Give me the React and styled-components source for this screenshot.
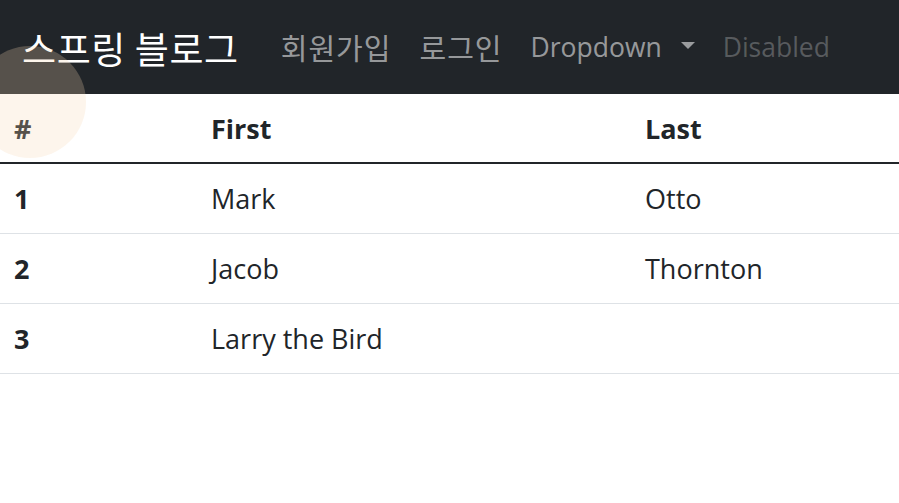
import React from "react";
import styled, { createGlobalStyle } from "styled-components";

const GlobalStyle = createGlobalStyle`
  html, body {
    margin: 0;
    padding: 0;
    background: #ffffff;
  }
  body {
    font-family: "Open Sans", "Noto Sans CJK KR", sans-serif;
    color: #212529;
  }
`;

const Page = styled.div`
  position: relative;
  width: 899px;
  height: 503px;
  overflow: hidden;
`;

const Navbar = styled.nav`
  height: 94px;
  background: #212529;
  display: flex;
  align-items: center;
  padding-left: 22px;
  box-sizing: border-box;
`;

const Brand = styled.a`
  font-family: "Noto Sans CJK KR", sans-serif;
  font-size: 37px;
  letter-spacing: 0.6px;
  color: #ffffff;
  margin-right: 28px;
  line-height: 1;
  margin-top: 2px;
`;

const NavLink = styled.a`
  display: flex;
  align-items: center;
  padding: 0 14px;
  line-height: 1;
  color: ${(p) => (p.$disabled ? "rgba(255,255,255,0.25)" : "rgba(255,255,255,0.55)")};
  font-family: ${(p) =>
    p.$korean ? `"Noto Sans CJK KR", sans-serif` : `"Open Sans", sans-serif`};
  font-size: ${(p) => (p.$korean ? "29px" : "26.5px")};
  letter-spacing: ${(p) => (p.$korean ? "1px" : "0")};
  margin-top: ${(p) => (p.$korean ? "0" : "0")};
`;

const Caret = styled.span`
  display: inline-block;
  margin-left: 19px;
  width: 0;
  height: 0;
  border-left: 7px solid transparent;
  border-right: 7px solid transparent;
  border-top: 7px solid rgba(255, 255, 255, 0.55);
  margin-top: -4px;
`;

const Highlight = styled.div`
  position: absolute;
  z-index: 5;
  left: -26px;
  top: 46px;
  width: 112px;
  height: 112px;
  border-radius: 50%;
  background: rgba(247, 217, 180, 0.25);
  pointer-events: none;
`;

const Table = styled.table`
  width: 100%;
  border-collapse: collapse;
  font-size: 27px;
`;

const Col = styled.col`
  width: ${(p) => p.$w}px;
`;

const Th = styled.th`
  text-align: left;
  font-weight: 700;
  height: 68px;
  padding: 0 14px;
  border-bottom: 2px solid #212529;
`;

const Td = styled.td`
  height: 69px;
  padding: 0 14px;
  border-bottom: 1px solid #dee2e6;
  font-weight: ${(p) => (p.$bold ? 700 : 400)};
`;

const rows = [
  ["1", "Mark", "Otto"],
  ["2", "Jacob", "Thornton"],
  ["3", "Larry the Bird", ""],
];

export default function App() {
  return (
    <Page>
      <GlobalStyle />
      <Navbar>
        <Brand>스프링 블로그</Brand>
        <NavLink $korean>회원가입</NavLink>
        <NavLink $korean>로그인</NavLink>
        <NavLink>
          Dropdown
          <Caret />
        </NavLink>
        <NavLink $disabled>Disabled</NavLink>
      </Navbar>
      <Table>
        <colgroup>
          <Col $w={197} />
          <Col $w={434} />
          <Col $w={268} />
        </colgroup>
        <thead>
          <tr>
            <Th>#</Th>
            <Th>First</Th>
            <Th>Last</Th>
          </tr>
        </thead>
        <tbody>
          {rows.map((r) => (
            <tr key={r[0]}>
              <Td $bold>{r[0]}</Td>
              <Td>{r[1]}</Td>
              <Td>{r[2]}</Td>
            </tr>
          ))}
        </tbody>
      </Table>
      <Highlight />
    </Page>
  );
}
